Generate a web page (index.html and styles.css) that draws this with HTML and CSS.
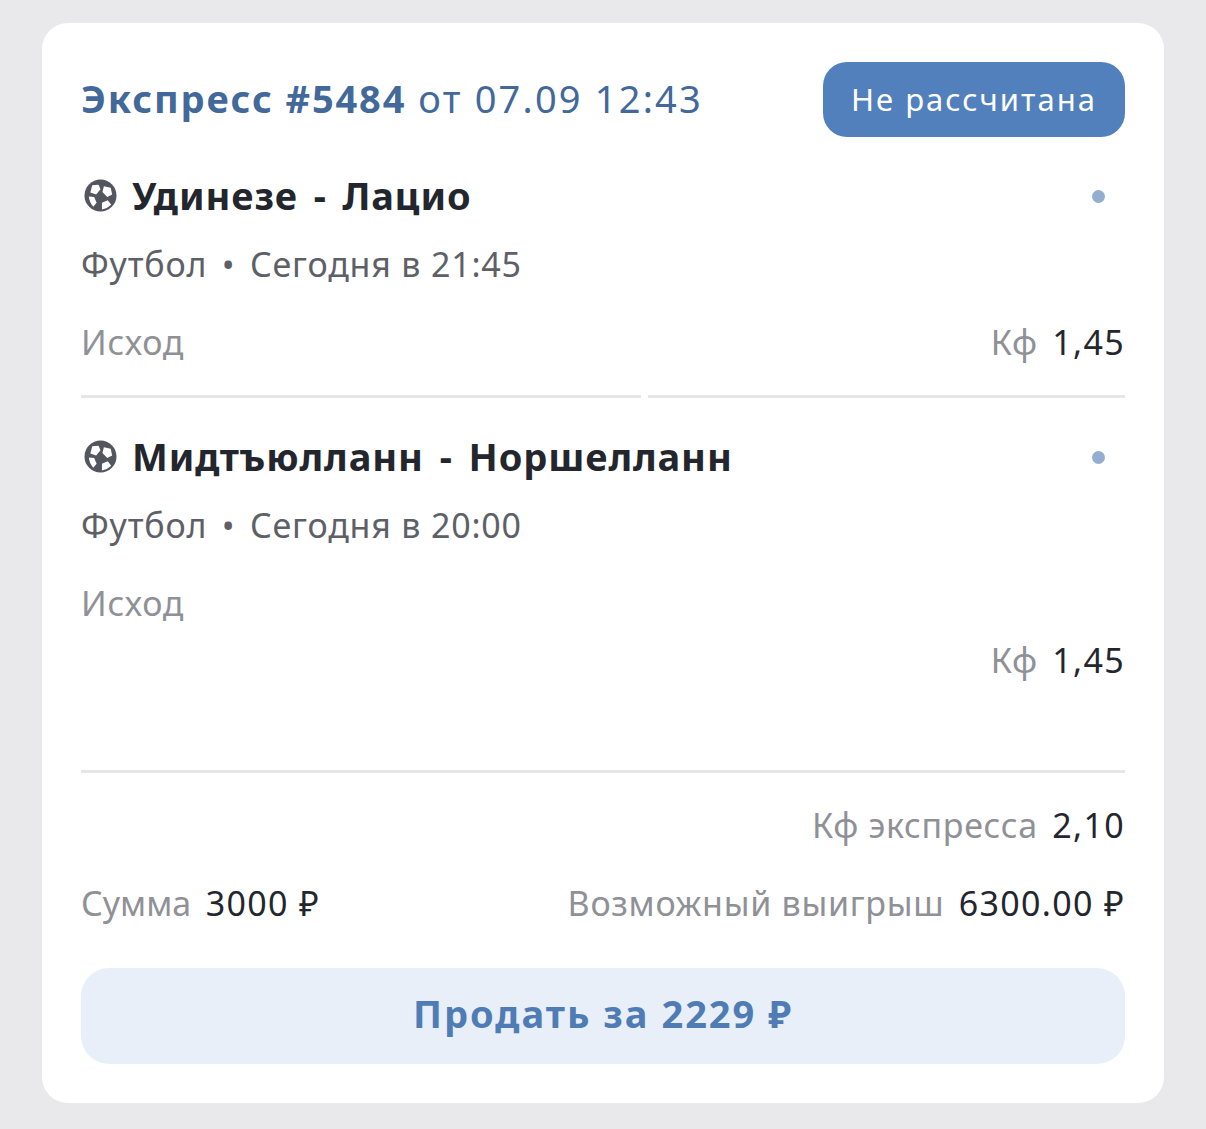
FILE: index.html
```html
<!DOCTYPE html>
<html lang="ru">
  <head>
    <meta charset="UTF-8" />
    <title>Экспресс #5484</title>
    <link rel="stylesheet" href="styles.css">
  </head>
  <body>
    <div class="card">
      <div class="header">
        <div class="title"><b>Экспресс #5484</b> от 07.09 12:43</div>
        <div class="status">Не рассчитана</div>
      </div>

      <!-- first event -->
      <div class="event">
        <div class="event-head">
          <svg class="ball" viewBox="3 3 34 34">
            <circle cx="20" cy="20" r="16.5" fill="#53565f"/>
            <path d="M11.5 9.5 L18 9 L20 13.5 L15.5 19 L9.5 17 Z" fill="#fff"/>
            <path d="M23.5 10.5 L30.5 12 L32 19 L27 21.5 L22 16.5 Z" fill="#fff"/>
            <path d="M8 21 L13.5 21.5 L16 27.5 L12.5 31.5 Q8.5 27 8 21 Z" fill="#fff"/>
            <path d="M21.5 27.5 L27.5 25 L31 29.5 Q27 33.5 21.5 34.5 Z" fill="#fff"/>
          </svg>
          <span class="event-name">Удинезе - Лацио</span>
          <span class="dot"></span>
        </div>
        <div class="event-info">Футбол <i>•</i> Сегодня в 21:45</div>
        <div class="outcome">
          <span class="label">Исход</span>
          <span><span class="label">Кф</span> <span class="value">1,45</span></span>
        </div>
      </div>
      <div class="divider split"><span class="left"></span><span class="right"></span></div>

      <!-- second event -->
      <div class="event second">
        <div class="event-head">
          <svg class="ball" viewBox="3 3 34 34">
            <circle cx="20" cy="20" r="16.5" fill="#53565f"/>
            <path d="M11.5 9.5 L18 9 L20 13.5 L15.5 19 L9.5 17 Z" fill="#fff"/>
            <path d="M23.5 10.5 L30.5 12 L32 19 L27 21.5 L22 16.5 Z" fill="#fff"/>
            <path d="M8 21 L13.5 21.5 L16 27.5 L12.5 31.5 Q8.5 27 8 21 Z" fill="#fff"/>
            <path d="M21.5 27.5 L27.5 25 L31 29.5 Q27 33.5 21.5 34.5 Z" fill="#fff"/>
          </svg>
          <span class="event-name">Мидтъюлланн - Норшелланн</span>
          <span class="dot"></span>
        </div>
        <div class="event-info">Футбол <i>•</i> Сегодня в 20:00</div>
        <div class="outcome tall">
          <span class="label">Исход</span>
          <span class="kf-low"><span class="label">Кф</span> <span class="value">1,45</span></span>
        </div>
      </div>
      <div class="divider"></div>

      <div class="total-kf">
        <span class="label">Кф экспресса</span> <span class="value">2,10</span>
      </div>
      <div class="totals">
        <span><span class="label sum-label">Сумма</span> <span class="value">3000 ₽</span></span>
        <span><span class="label">Возможный выигрыш</span> <span class="value">6300.00 ₽</span></span>
      </div>

      <button class="sell-btn">Продать за 2229 ₽</button>
    </div>
  </body>
</html>
```

FILE: styles.css
```css
body {
  margin: 0;
  background: #e9e9ec;
  font-family: "Noto Sans", Arial, sans-serif;
  font-size: 34px;
  letter-spacing: 0.7px;
  color: #24262e;
}

.card {
  width: 1044px;
  height: 1002px;
  margin: 23px 0 0 42px;
  padding: 39px;
  background: white;
  border-radius: 26px;
}

.header {
  display: flex;
  justify-content: space-between;
  align-items: center;
  height: 75px;
}

.title {
  font-size: 38px;
  letter-spacing: 2.2px;
  line-height: 73px;
  height: 75px;
  color: #42699a;
}

.title b {
  font-weight: 700;
  letter-spacing: 1.85px;
}

.status {
  width: 302px;
  height: 75px;
  line-height: 75px;
  text-align: center;
  background: #5280bc;
  color: white;
  border-radius: 24px;
  font-size: 31px;
  letter-spacing: 2px;
}

.event {
  height: 223px;
}

.event.second {
  height: 337px;
}

.event-head {
  display: flex;
  align-items: center;
  height: 46px;
  margin-top: 35px;
}

.ball {
  width: 33px;
  height: 33px;
  margin: 1px 15px 0 3px;
}

.event-name {
  font-size: 38px;
  font-weight: 700;
  letter-spacing: 0.9px;
  word-spacing: 5px;
  flex: 1;
}

.dot {
  width: 13px;
  height: 13px;
  margin: 3px 20px 0 0;
  border-radius: 50%;
  background: #93aed0;
}

.event-info {
  height: 46px;
  line-height: 46px;
  margin-top: 23px;
  letter-spacing: 0.8px;
  color: #5e6068;
}

.event-info i {
  font-style: normal;
  margin: 0 5px;
}

.outcome {
  display: flex;
  justify-content: space-between;
  line-height: 46px;
  margin-top: 32px;
}

.outcome.tall {
  height: 103px;
}

.kf-low {
  align-self: flex-end;
}

.label {
  color: #8f9197;
  margin-right: 5px;
}

.sum-label {
  letter-spacing: 0;
}

.value {
  letter-spacing: 1.3px;
}

.divider {
  height: 3px;
  background: #e6e6e8;
}

.divider.split {
  display: flex;
  gap: 7px;
  background: none;
}

.divider.split .left {
  width: 560px;
  background: #e6e6e8;
}

.divider.split .right {
  flex: 1;
  background: #e6e6e8;
}

.total-kf {
  text-align: right;
  line-height: 46px;
  margin-top: 29px;
}

.totals {
  display: flex;
  justify-content: space-between;
  line-height: 46px;
  margin-top: 32px;
}

.sell-btn {
  display: block;
  width: 100%;
  height: 96px;
  margin-top: 42px;
  padding-bottom: 7px;
  border: none;
  border-radius: 28px;
  background: #e8eff8;
  color: #4f7cb4;
  font-family: inherit;
  font-size: 38px;
  font-weight: 700;
  letter-spacing: 2px;
}
```
